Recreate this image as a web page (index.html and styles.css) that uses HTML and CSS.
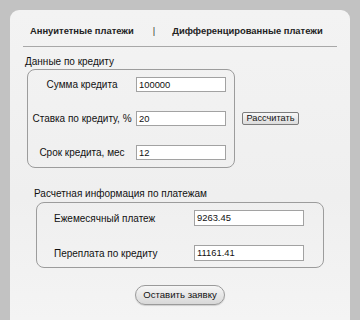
FILE: index.html
```html
<!DOCTYPE html>
<html lang="ru">
<head>
<meta charset="utf-8">
<title>Кредитный калькулятор</title>
<link rel="stylesheet" href="styles.css">
</head>
<body>
<div class="panel">
  <div class="tabs">
    <span class="tab">Аннуитетные платежи</span>
    <span class="sep">|</span>
    <span class="tab">Дифференцированные платежи</span>
  </div>

  <div class="legend legend1">Данные по кредиту</div>
  <div class="calc-row">
    <div class="box box1">
      <div class="row"><span class="lbl">Сумма кредита</span><span class="inp">100000</span></div>
      <div class="row"><span class="lbl">Ставка по кредиту, %</span><span class="inp">20</span></div>
      <div class="row"><span class="lbl">Срок кредита, мес</span><span class="inp">12</span></div>
    </div>
    <div class="btn-wrap"><span class="btn">Рассчитать</span></div>
  </div>

  <div class="legend legend2">Расчетная информация по платежам</div>
  <div class="box box2">
    <div class="row"><span class="lbl">Ежемесячный платеж</span><span class="inp">9263.45</span></div>
    <div class="row"><span class="lbl">Переплата по кредиту</span><span class="inp">11161.41</span></div>
  </div>

  <div class="submit-wrap"><span class="submit">Оставить заявку</span></div>
</div>
</body>
</html>
```

FILE: styles.css
```css
html, body {
  margin: 0;
  padding: 0;
}
body {
  width: 360px;
  height: 320px;
  overflow: hidden;
  background: #c2c2c2;
  font-family: "Liberation Sans", Arial, sans-serif;
  color: #111;
}
.panel {
  margin: 10px 10px 0;
  width: 340px;
  height: 310px;
  box-sizing: border-box;
  border-radius: 9px 9px 0 0;
  background: linear-gradient(180deg, #f3f3f3 0%, #efefef 60%, #f4f4f4 100%);
}
.tabs {
  margin: 0 13px;
  height: 37px;
  box-sizing: border-box;
  border-bottom: 1px solid #a8a8a8;
  display: flex;
  align-items: center;
  padding: 4px 0 0 7px;
  font-size: 9.4px;
  font-weight: bold;
  color: #222;
}
.sep {
  font-weight: normal;
  color: #333;
  margin: 0 17px 0 19px;
}
.legend {
  font-size: 10px;
  line-height: 12px;
}
.legend1 {
  margin: 9px 0 0 15px;
}
.calc-row {
  display: flex;
  align-items: flex-start;
  margin: 1px 0 0 17px;
}
.box {
  border: 1px solid #9c9c9c;
  border-radius: 8px;
  box-sizing: border-box;
  display: flex;
  flex-direction: column;
  gap: 19px;
}
.box1 {
  width: 208px;
  height: 99px;
  padding-top: 7px;
}
.row {
  display: flex;
  align-items: center;
  height: 15px;
}
.box1 .lbl {
  width: 108px;
  text-align: center;
  font-size: 10px;
}
.inp {
  box-sizing: border-box;
  height: 15px;
  border: 1px solid #a2a2a2;
  background: #fff;
  font-size: 9.4px;
  line-height: 13px;
  padding-left: 2px;
}
.box1 .inp {
  width: 90px;
}
.btn-wrap {
  padding: 43px 0 0 7px;
}
.btn {
  display: block;
  width: 57px;
  height: 13px;
  box-sizing: border-box;
  border: 1px solid #7c7c7c;
  border-radius: 2px;
  background: linear-gradient(180deg, #f7f7f7, #dcdcdc);
  font-size: 9.2px;
  line-height: 11px;
  text-align: center;
}
.legend2 {
  margin: 20px 0 0 24px;
}
.box2 {
  margin: 2px 0 0 26px;
  width: 288px;
  height: 66px;
  padding-top: 7px;
}
.box2 .row {
  height: 16px;
}
.box2 .lbl {
  width: 140px;
  padding-left: 17px;
  font-size: 10px;
}
.box2 .inp {
  width: 110px;
  height: 16px;
}
.submit-wrap {
  display: flex;
  justify-content: center;
  margin-top: 17px;
}
.submit {
  display: block;
  width: 90px;
  height: 20px;
  box-sizing: border-box;
  border: 1px solid #9a9a9a;
  border-radius: 10px;
  background: linear-gradient(180deg, #f6f6f6, #d8d8d8);
  font-size: 9.6px;
  line-height: 18px;
  text-align: center;
  box-shadow: 0 1px 1px rgba(0,0,0,0.15);
}
```
